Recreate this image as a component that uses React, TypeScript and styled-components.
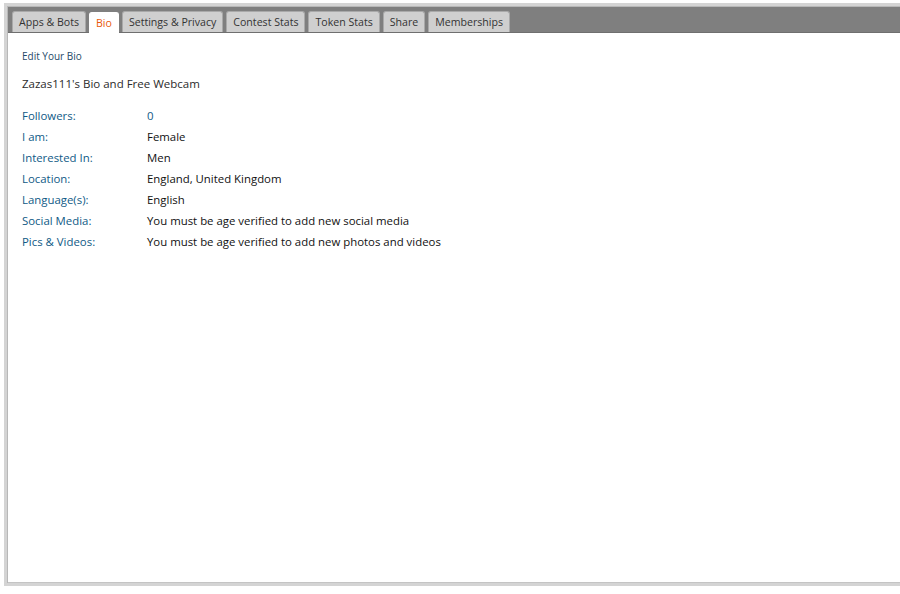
import React from 'react';
import styled, {createGlobalStyle} from 'styled-components';

const GlobalStyle = createGlobalStyle`
  html, body {
    margin: 0;
    padding: 0;
    background: #ffffff;
    font-family: "Open Sans", "DejaVu Sans", sans-serif;
  }
`;

type Row = {
    label: string
    value: string
    link?: boolean
}

const tabs = ['Apps & Bots', 'Bio', 'Settings & Privacy', 'Contest Stats', 'Token Stats', 'Share', 'Memberships'];

const rows: Row[] = [
    {label: 'Followers:', value: '0', link: true},
    {label: 'I am:', value: 'Female'},
    {label: 'Interested In:', value: 'Men'},
    {label: 'Location:', value: 'England, United Kingdom'},
    {label: 'Language(s):', value: 'English'},
    {label: 'Social Media:', value: 'You must be age verified to add new social media'},
    {label: 'Pics & Videos:', value: 'You must be age verified to add new photos and videos'},
];

export default function App() {
    return (
        <>
            <GlobalStyle/>
            <Page>
                <Frame>
                    <TabBar>
                        {tabs.map(tab => (
                            <Tab key={tab} active={tab === 'Bio'}>{tab}</Tab>
                        ))}
                    </TabBar>
                    <Body>
                        <EditLink>Edit Your Bio</EditLink>
                        <Title>Zazas111's Bio and Free Webcam</Title>
                        <Table>
                            {rows.map(row => (
                                <React.Fragment key={row.label}>
                                    <Label>{row.label}</Label>
                                    <Value link={row.link}>{row.value}</Value>
                                </React.Fragment>
                            ))}
                        </Table>
                    </Body>
                </Frame>
            </Page>
        </>
    );
}

const Page = styled.div`
  width: 900px;
  height: 594px;
  overflow: hidden;
  padding: 3px 0 0 4px;
  box-sizing: border-box;
`;

const Frame = styled.div`
  width: 920px;
  height: 583px;
  box-sizing: border-box;
  border: 3px solid #d4d4d4;
  border-right: none;
  box-shadow: inset 1px 1px 0 #b8b8b8, inset 0 -1px 0 #c4c4c4;
  padding: 1px 0 0 1px;
  display: flex;
  flex-direction: column;
  background: #ffffff;
`;

const TabBar = styled.div`
  display: flex;
  align-items: flex-end;
  gap: 3px;
  height: 26px;
  padding: 0 0 0 4px;
  background: #7f7f7f;
  border-bottom: 1px solid #6f6f6f;
  box-sizing: border-box;
`;

const Tab = styled.div<{ active?: boolean }>`
  height: 20px;
  line-height: 20px;
  padding: 0 6px;
  font-size: 10.6px;
  color: ${(p) => p.active ? '#e8590c' : '#333333'};
  background: ${(p) => p.active ? '#ffffff' : '#cfcfcf'};
  border: 1px solid ${(p) => p.active ? '#ffffff' : '#a9a9a9'};
  border-bottom: none;
  border-radius: 3px 3px 0 0;
  margin-bottom: ${(p) => p.active ? '-1px' : '0'};
  white-space: nowrap;
`;

const Body = styled.div`
  flex: 1;
  padding: 16px 0 0 14px;
`;

const EditLink = styled.div`
  font-size: 10px;
  line-height: 14px;
  color: #1f4a68;
`;

const Title = styled.div`
  margin-top: 13px;
  font-size: 11.5px;
  line-height: 16px;
  color: #2b2b2b;
`;

const Table = styled.div`
  display: grid;
  grid-template-columns: 125px auto;
  grid-auto-rows: 21px;
  margin-top: 13px;
  align-items: center;
`;

const Label = styled.div`
  font-size: 11.4px;
  color: #0f5a86;
`;

const Value = styled.div<{ link?: boolean }>`
  font-size: 11.4px;
  color: ${(p) => p.link ? '#0f5a86' : '#111111'};
`;
